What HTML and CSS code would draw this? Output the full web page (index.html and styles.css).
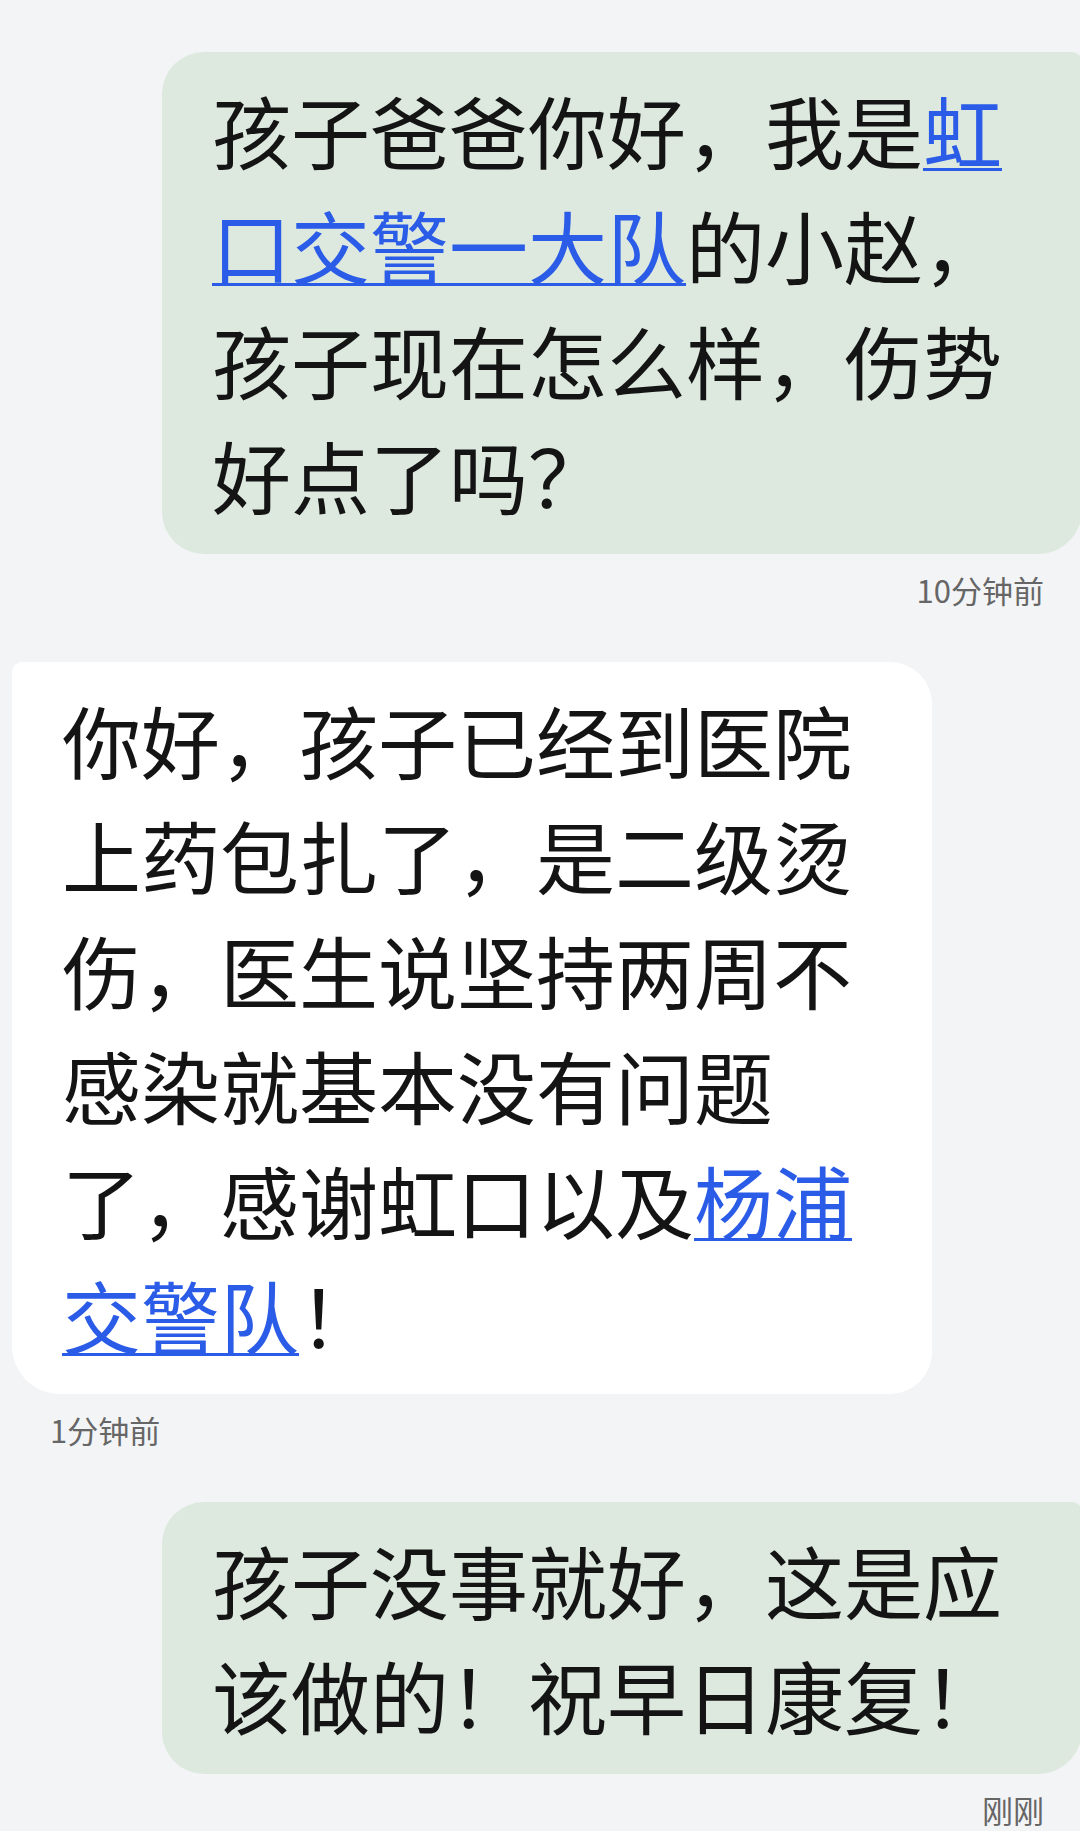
FILE: index.html
```html
<!DOCTYPE html>
<html lang="zh-CN">
<head>
<meta charset="utf-8">
<title>聊天</title>
<link rel="stylesheet" href="styles.css">
</head>
<body>
<main class="chat">
  <div class="bubble bubble-out">孩子爸爸你好，我是<a class="link" href="#">虹口交警一大队</a>的小赵，孩子现在怎么样，伤势好点了吗？</div>
  <div class="time time-right">10分钟前</div>

  <div class="bubble bubble-in">你好，孩子已经到医院上药包扎了，是二级烫伤，医生说坚持两周不感染就基本没有问题了，感谢虹口以及<a class="link" href="#">杨浦交警队</a>！</div>
  <div class="time time-left">1分钟前</div>

  <div class="bubble bubble-out">孩子没事就好，这是应该做的！祝早日康复！</div>
  <div class="time time-right">刚刚</div>
</main>
</body>
</html>
```

FILE: styles.css
```css
html, body {
  margin: 0;
  padding: 0;
  overflow: hidden;
  background: #f3f4f6;
}

.chat {
  display: flex;
  flex-direction: column;
  padding-top: 52px;
  font-family: "Noto Sans CJK SC", "Noto Sans", sans-serif;
}

.bubble {
  box-sizing: border-box;
  width: 920px;
  font-size: 79px;
  line-height: 115px;
  color: #141414;
  padding: 20px 50px 22px 50px;
}

.bubble-out {
  margin-left: 162px;
  background: #dde9df;
  border-radius: 42px 10px 44px 42px;
}

.bubble-in {
  margin-left: 12px;
  background: #ffffff;
  border-radius: 10px 42px 42px 48px;
}

.link {
  color: #2b5ce8;
  text-decoration: underline;
  text-decoration-thickness: 3px;
  text-underline-offset: 4px;
}

.time {
  font-size: 31px;
  line-height: 40px;
  color: #666666;
  margin-top: 16px;
  margin-bottom: 52px;
}

.time-right {
  text-align: right;
  padding-right: 36px;
}

.time-left {
  padding-left: 50px;
}
```
